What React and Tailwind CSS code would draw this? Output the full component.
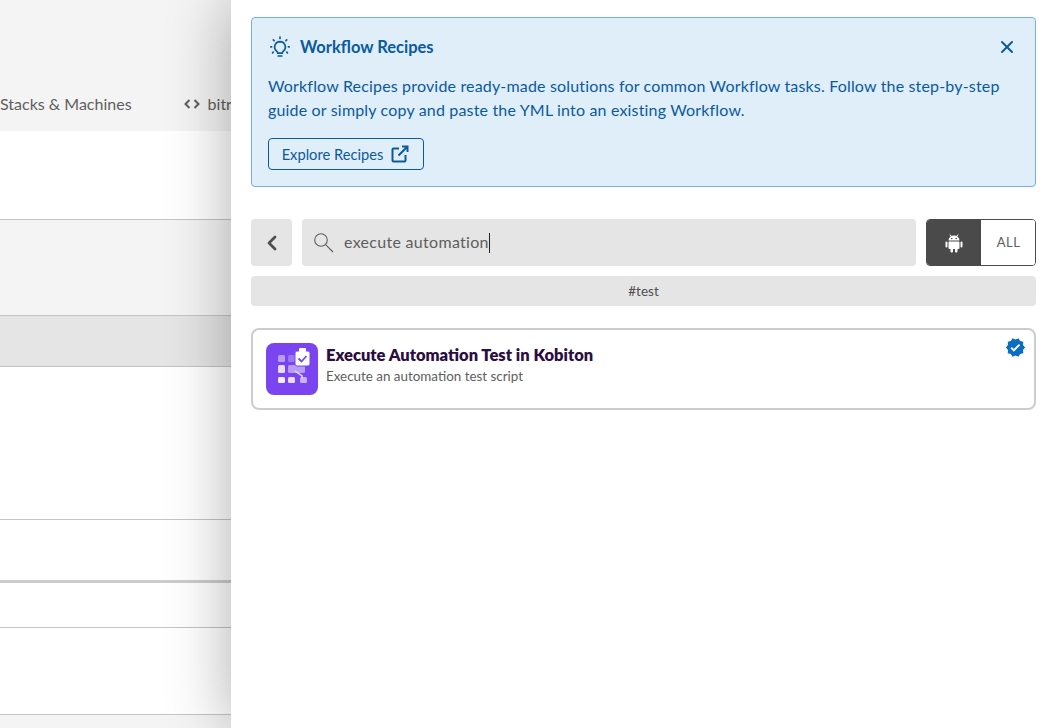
import { ChevronLeft, X } from 'lucide-react';
import { MdVerified } from 'react-icons/md';

function BulbIcon() {
  return (
    <svg width="24" height="24" viewBox="0 0 24 24" fill="none" stroke="#0a5a9e" strokeWidth="1.700" strokeLinecap="round">
      <path d="M12 6.600a5.400 5.400 0 0 0-3.200 9.700c.7.600 1 1.100 1 1.900h4.400c0-.8.300-1.300 1-1.900A5.400 5.400 0 0 0 12 6.600z" />
      <path d="M10.200 21h3.600" />
      <path d="M12 2v1.400M5.300 4.800l.8.8M18.700 4.800l-.8.800M2.800 11.800h.8M20.400 11.800h.8M4.600 17.800l.6-.6M19.400 17.800l-.6-.6" />
    </svg>
  );
}

function SearchIcon() {
  return (
    <svg width="21" height="21" viewBox="0 0 21 21" fill="none" stroke="#5e5e5e" strokeWidth="1.100">
      <circle cx="8" cy="8" r="6.300" />
      <path d="M12.600 12.600l7.400 7.400" />
    </svg>
  );
}

function ExternalIcon() {
  return (
    <svg width="18" height="18" viewBox="0 0 18 18" fill="none" stroke="#0a5a9e" strokeWidth="2">
      <path d="M8 3.500H2.500a1 1 0 0 0-1 1v11a1 1 0 0 0 1 1h11a1 1 0 0 0 1-1V10" />
      <path d="M11 1.500h5.500V7M16.500 1.500L7.500 10.500" />
    </svg>
  );
}

function AndroidIcon() {
  return (
    <svg width="20" height="20" viewBox="0 0 20 20" fill="#ffffff">
      <path d="M4.500 7.500a5.500 5 0 0 1 11 0z" />
      <path d="M6 1.500l1.500 2.500M14 1.500l-1.500 2.500" stroke="#ffffff" strokeWidth="1" />
      <rect x="4.500" y="8.500" width="11" height="7.500" rx="1" />
      <rect x="1.500" y="8.500" width="2" height="6" rx="1" />
      <rect x="16.500" y="8.500" width="2" height="6" rx="1" />
      <rect x="6.500" y="15" width="2.500" height="4.500" rx="1" />
      <rect x="11" y="15" width="2.500" height="4.500" rx="1" />
      <circle cx="7.800" cy="5.500" r="0.800" fill="#4a4a4a" />
      <circle cx="12.200" cy="5.500" r="0.800" fill="#4a4a4a" />
    </svg>
  );
}

function CodeIcon() {
  return (
    <svg width="16" height="12" viewBox="0 0 16 12" fill="none" stroke="#5e5e5e" strokeWidth="2">
      <path d="M5.500 2L1.500 6l4 4M10.500 2l4 4-4 4" />
    </svg>
  );
}

function KobitonLogo() {
  return (
    <svg width="52" height="52" viewBox="0 0 52 52">
      <rect width="52" height="52" rx="8" fill="#7a45f0" />
      <rect x="12" y="12" width="7" height="7" rx="1.500" fill="#b79df8" />
      <rect x="22" y="12" width="7" height="7" rx="1.500" fill="#9a78f5" />
      <rect x="12" y="22" width="7" height="8" rx="1.500" fill="#e6dcfd" />
      <rect x="22" y="22" width="17" height="8" rx="1.500" fill="#b79df8" />
      <rect x="12" y="34" width="7" height="6" rx="1.500" fill="#f1ecfe" />
      <rect x="22" y="34" width="7" height="6" rx="1.500" fill="#e6dcfd" />
      <rect x="34" y="34" width="7" height="6" rx="1.500" fill="#c9b2fa" />
      <path d="M29 28l7 5v2" fill="none" stroke="#e6dcfd" strokeWidth="1.500" />
      <rect x="29" y="8" width="15" height="15" rx="2" fill="#ffffff" stroke="#7a45f0" strokeWidth="1" />
      <rect x="33" y="5" width="7" height="4" rx="1" fill="#ffffff" />
      <path d="M32.500 15.500l3 3 5-5.500" fill="none" stroke="#7a45f0" strokeWidth="1.800" />
    </svg>
  );
}

function Background() {
  return (
    <div className="w-[231px] flex-none overflow-hidden">
      <div className="h-[131px] bg-[#f4f4f4] flex items-end pb-[17px] whitespace-nowrap text-[16px] leading-[20px] text-[#5e5e5e]">
        <span>Stacks &amp; Machines</span>
        <span className="ml-[52px] mr-[8px] h-[20px] flex items-center"><CodeIcon /></span>
        <span>bitrise.yml</span>
      </div>
      <div className="h-[89px] bg-white border-b border-[#c4c4c4]" />
      <div className="h-[96px] bg-[#f4f4f4] border-b border-[#c4c4c4]" />
      <div className="h-[51px] bg-[#e5e5e5] border-b border-[#c4c4c4]" />
      <div className="h-[153px] bg-white border-b border-[#c4c4c4]" />
      <div className="h-[63px] bg-white border-b-[3px] border-[#cccccc]" />
      <div className="h-[45px] bg-white border-b border-[#c4c4c4]" />
      <div className="h-[87px] bg-white border-b border-[#c4c4c4]" />
      <div className="h-[14px] bg-[#f4f4f4]" />
    </div>
  );
}

export default function App() {
  return (
    <div className="flex h-[728px] w-[1057px] overflow-hidden bg-white font-['Lato','Noto_Sans',sans-serif]">
      <Background />
      <div className="relative z-10 flex-1 bg-white pl-[20px] pr-[21px] pt-[17px] shadow-[0_0_60px_rgba(0,0,0,0.32)]">
        <div className="h-[170px] rounded-[4px] border border-[#74b0e3] bg-[#e0eefa] pl-[16px] pr-[18px] pt-[16px] text-[#0a5a9e]">
          <div className="flex items-center h-[26px]">
            <BulbIcon />
            <span className="ml-[8px] flex-1 text-[16.500px] font-bold">Workflow Recipes</span>
            <X size={20} strokeWidth={2.400} />
          </div>
          <p className="mt-[14px] text-[16px] leading-[24px] tracking-[0.17px]">
            Workflow Recipes provide ready-made solutions for common Workflow tasks. Follow the step-by-step guide or simply copy and paste the YML into an existing Workflow.
          </p>
          <button className="mt-[16px] flex h-[32px] w-[156px] items-center justify-center gap-[8px] rounded-[4px] border border-[#0a5a9e] pr-[1px] text-[14.700px]">
            Explore Recipes
            <ExternalIcon />
          </button>
        </div>

        <div className="mt-[32px] flex h-[47px] gap-[10px]">
          <button className="flex w-[41px] items-center justify-center rounded-[4px] bg-[#e5e5e5] text-[#4f4f4f]">
            <ChevronLeft size={24} strokeWidth={2.800} />
          </button>
          <div className="flex flex-1 items-center rounded-[4px] bg-[#e5e5e5] pl-[11px] text-[#5e5e5e]">
            <SearchIcon />
            <span className="ml-[10px] -mt-[1px] text-[16px] tracking-[0.3px]">execute automation</span>
            <span className="h-[20px] w-px bg-[#222222]" />
          </div>
          <div className="flex w-[110px] overflow-hidden rounded-[4px] border border-[#4a4a4a]">
            <div className="flex w-[54px] items-center justify-center bg-[#4a4a4a] text-white">
              <AndroidIcon />
            </div>
            <div className="flex flex-1 items-center justify-center bg-white pl-[1px] text-[13px] tracking-[0.5px] text-[#5e5e5e]">ALL</div>
          </div>
        </div>

        <div className="mt-[10px] flex h-[30px] items-center justify-center rounded-[4px] bg-[#e5e5e5] pt-[1px] text-[13.500px] text-[#4f4f4f]">
          #test
        </div>

        <div className="relative mt-[22px] flex h-[82px] items-center rounded-[8px] border-2 border-[#cccccc] pl-[13px]">
          <KobitonLogo />
          <div className="ml-[8px] -mt-[8px]">
            <div className="text-[16.500px] leading-[20px] font-extrabold text-[#2b0e3f]">Execute Automation Test in Kobiton</div>
            <div className="mt-[2px] text-[13.400px] leading-[18px] text-[#5e5e5e]">Execute an automation test script</div>
          </div>
          <MdVerified size={21} className="absolute right-[8px] top-[7px] text-[#0b6cc4]" />
        </div>
      </div>
    </div>
  );
}
